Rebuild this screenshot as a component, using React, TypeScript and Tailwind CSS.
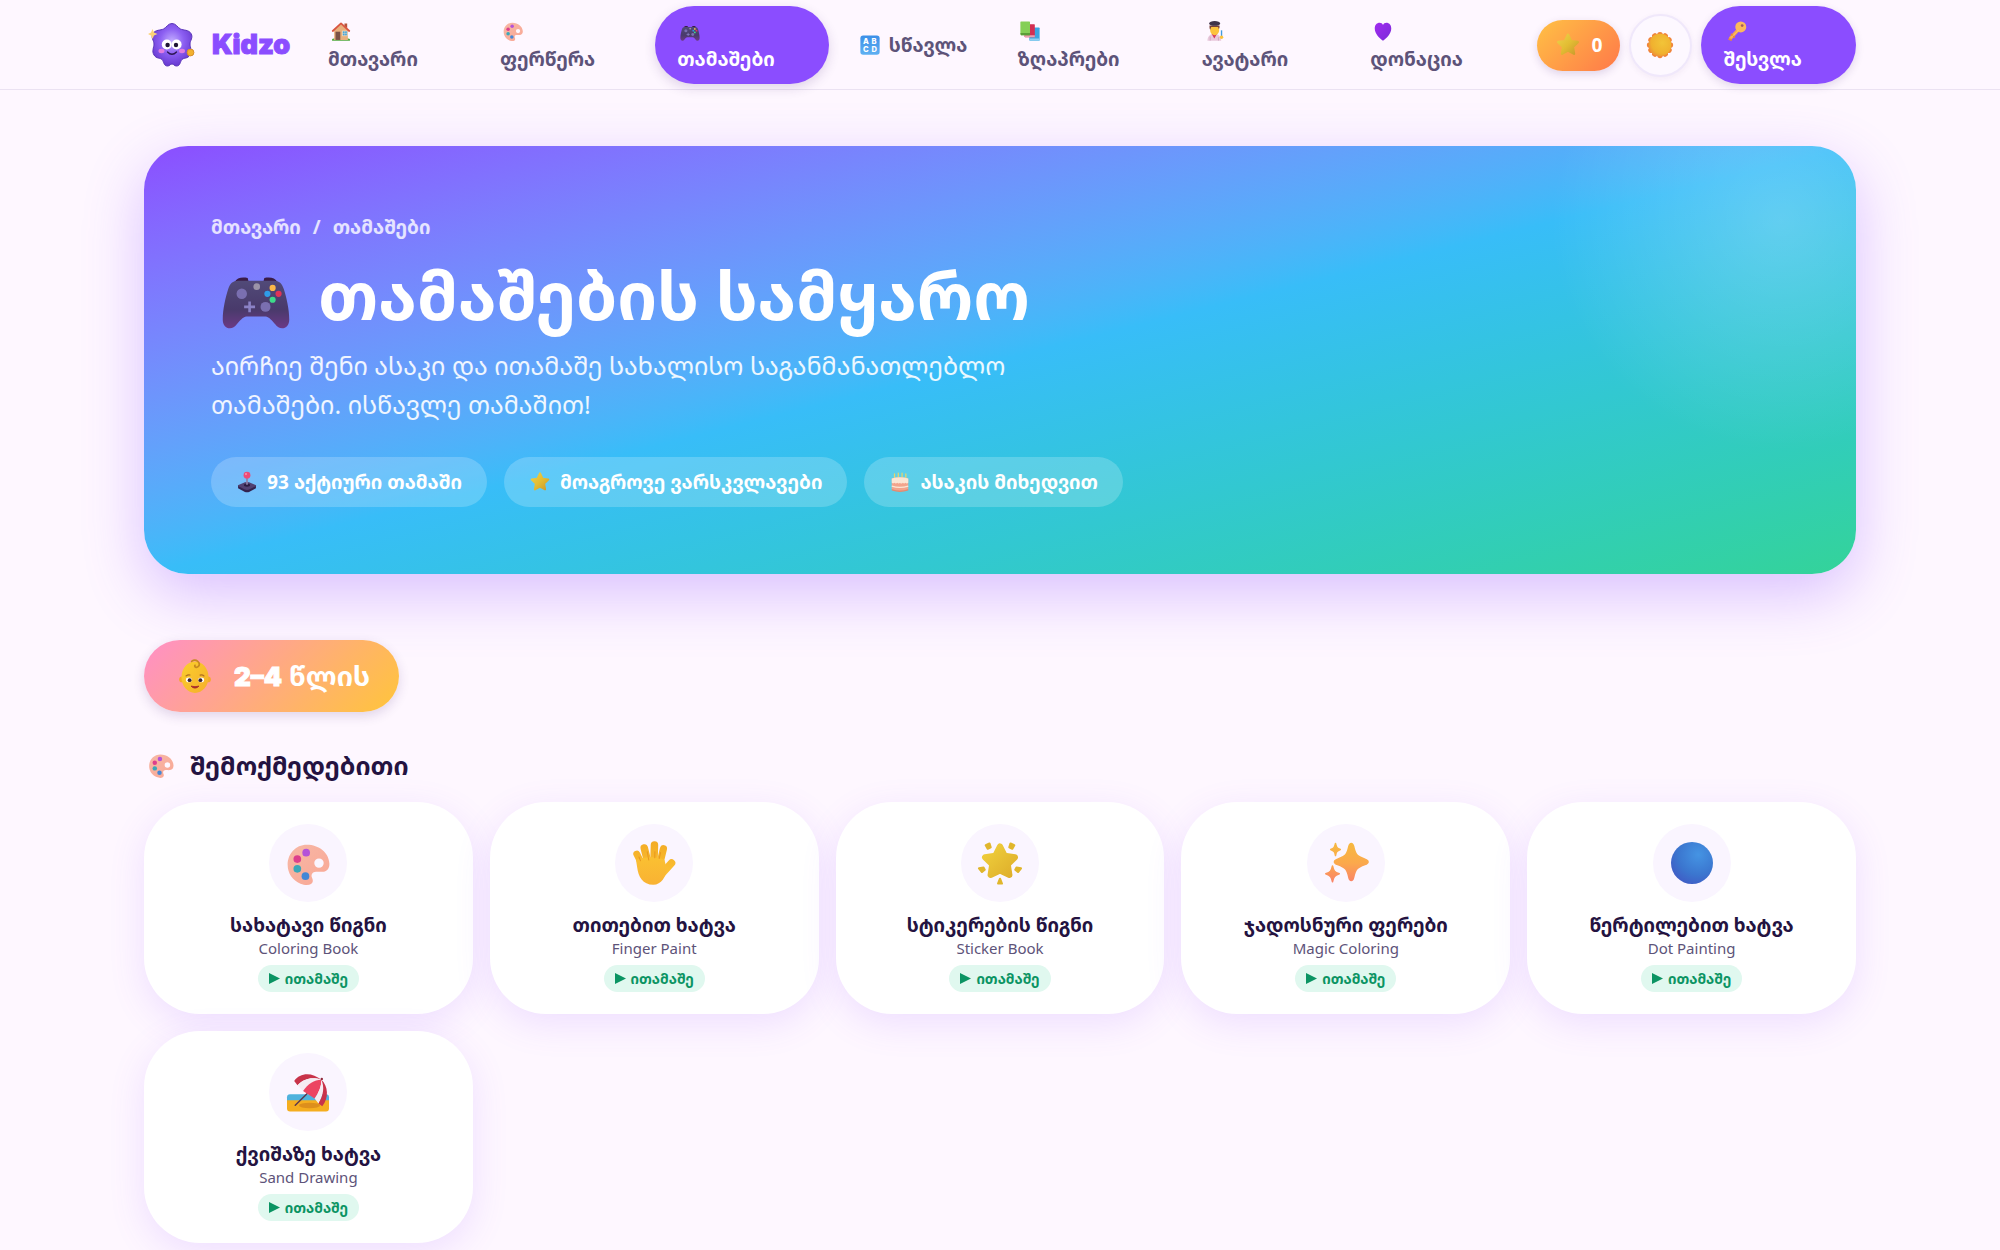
import type { ReactNode } from "react";
import { clsx } from "clsx";

type IconName =
  | "house"
  | "palette"
  | "gamepad"
  | "letters"
  | "books"
  | "artist"
  | "heart"
  | "star"
  | "sun"
  | "key"
  | "joystick"
  | "cake"
  | "baby"
  | "hand"
  | "glowStar"
  | "sparkles"
  | "blueDot"
  | "beach";

// every icon is drawn on a 32x32 grid
const ICONS: Record<IconName, ReactNode> = {
  house: (
    <>
      <path d="M3 27.500q6-2 13-2t13 2V30H3z" fill="#4fa83d" />
      <path d="M6 15 16 6l10 9v14H6z" fill="#e8b07c" />
      <path d="M21 5h4v7l-4-3z" fill="#b5543c" />
      <path d="M8 17h7v12H8z" fill="#7b5245" />
      <rect x="18" y="16" width="7" height="7" fill="#3fa6dd" stroke="#f3dcc0" />
      <path d="M21.500 16v7M18 19.500h7" stroke="#f3dcc0" strokeWidth=".7" />
      <path d="M4 16 16 5l12 11" fill="none" stroke="#d9553f" strokeWidth="2.600" strokeLinecap="round" strokeLinejoin="round" />
    </>
  ),
  palette: (
    <g transform="translate(1 2) scale(.95)">
      <path
        d="M15 2C7 2 1.500 8.500 1.500 16c0 6 3.500 11 9 13.300 3 1.200 5.800 1.200 7.400.2 1.600-1 1.500-2.800.8-4.300-.9-2-.2-3.700 1.800-4.200 2-.5 4.200.2 6.200-.2C29.500 20.300 31 18 30.800 15 30.300 7.500 23.500 2 15 2zm8.500 9.500a3.300 3.300 0 1 1 0 6.600 3.300 3.300 0 0 1 0-6.600z"
        fill="url(#paletteSkin)"
        fillRule="evenodd"
      />
      <circle cx="14.500" cy="7.500" r="2.700" fill="#b452d8" />
      <circle cx="8.300" cy="12" r="2.700" fill="#dd3f8c" />
      <circle cx="8.300" cy="18.800" r="2.700" fill="#3aa7b8" />
      <circle cx="14" cy="24" r="2.700" fill="#4487d6" />
      <defs>
        <linearGradient id="paletteSkin" x1="0" y1="0" x2="1" y2="1">
          <stop stopColor="#f7b8a6" />
          <stop offset="1" stopColor="#f9a795" />
        </linearGradient>
      </defs>
    </g>
  ),
  gamepad: (
    <g transform="translate(0 3)">
      <path d="M7 7.500C8 5.700 10 5.300 12.500 5.800l.5 2H7zM25 7.500c-1-1.800-3-2.200-5.500-1.700l-.5 2h6z" fill="#3a1c46" />
      <path
        d="M8.500 7h15c2.300 0 3.500 1.200 4.200 3.500C28.800 14 30 19 30 23.300c0 2.400-1.300 3.700-3 3.700-1.200 0-2-.5-3-1.800-1-1.200-2.400-3-4-3.200h-8c-1.600.2-3 2-4 3.200C7 26.500 6.200 27 5 27c-1.700 0-3-1.300-3-3.700C2 19 3.200 14 4.300 10.500 5 8.200 6.200 7 8.500 7z"
        fill="url(#padBody)"
      />
      <circle cx="10" cy="12.500" r="2.200" fill="#7a6fb0" />
      <circle cx="20" cy="18" r="2.100" fill="#7a6fb0" />
      <path d="M13.300 15.700v4.600M11 18h4.600" stroke="#8b82c6" strokeWidth="1.100" />
      <circle cx="16.300" cy="9.500" r="1.400" fill="#9b94a8" />
      <circle cx="23" cy="10" r="1.300" fill="#fbb849" />
      <circle cx="25.500" cy="12.500" r="1.300" fill="#e03358" />
      <circle cx="20.800" cy="12.500" r="1.300" fill="#2f9ce8" />
      <circle cx="23" cy="15" r="1.300" fill="#3ddb8a" />
      <defs>
        <linearGradient id="padBody" x1="0" y1="0" x2="0" y2="1">
          <stop stopColor="#514a78" />
          <stop offset=".6" stopColor="#493a6b" />
          <stop offset="1" stopColor="#6b3a86" />
        </linearGradient>
      </defs>
    </g>
  ),
  letters: (
    <>
      <rect x="2" y="2" width="28" height="28" rx="4" fill="url(#lettersBg)" />
      <g fill="#fff" fontFamily="Inter, sans-serif" fontWeight="800" fontSize="11" textAnchor="middle">
        <text x="10" y="14.500">A</text>
        <text x="22" y="14.500">B</text>
        <text x="10" y="26.500">C</text>
        <text x="22" y="26.500">D</text>
      </g>
      <defs>
        <linearGradient id="lettersBg" x1="0" y1="0" x2="0" y2="1">
          <stop stopColor="#3b8fe8" />
          <stop offset="1" stopColor="#5fb0f2" />
        </linearGradient>
      </defs>
    </>
  ),
  books: (
    <>
      <rect x="15" y="11" width="15" height="19" rx="1" fill="#3aa5e0" />
      <path d="M15 27h15v3H16z" fill="#8fd0f0" />
      <rect x="8" y="6" width="15" height="19" rx="1" fill="#d22f52" />
      <path d="M8 22h15v3H9z" fill="#e9a0b2" />
      <rect x="2" y="2" width="14" height="20" rx="1" fill="#84cf56" />
      <path d="M2 19h14v3H3z" fill="#5a9e38" />
    </>
  ),
  artist: (
    <>
      <path d="M5 30c0-6 4-10 10-10s10 4 10 10z" fill="#e9c9dc" />
      <path d="M11 20h8l-4 7z" fill="#d5385f" />
      <path d="M9 9h13v6c0 4-3 7-6.500 7S9 19 9 15z" fill="#fcc33c" />
      <path d="M8 8c0 3 0 5 1 6l1.500-4h10l1 3c1.500-1 1-3 1-5z" fill="#7a4136" />
      <ellipse cx="15.500" cy="5" rx="8" ry="3.500" fill="#3f3348" />
      <path d="M25.500 15v9" stroke="#3f9be0" strokeWidth="2" />
      <circle cx="25.500" cy="25" r="2.500" fill="#fcc33c" />
      <path d="M9 24v6M21 25v5" stroke="#c79ab8" />
    </>
  ),
  heart: (
    <>
      <path
        d="M16 30C11 27 4 20 4 12.500 4 7 7.300 4 11 4c2.300 0 4.200 1.300 5 3.200C16.800 5.300 18.700 4 21 4c3.700 0 7 3 7 8.500C28 20 21 27 16 30z"
        fill="url(#heartFill)"
      />
      <defs>
        <linearGradient id="heartFill" x1="0" y1="0" x2="1" y2="1">
          <stop stopColor="#a12bf0" />
          <stop offset="1" stopColor="#7a2bd8" />
        </linearGradient>
      </defs>
    </>
  ),
  star: (
    <>
      <path
        d="M16 3.500 19.700 11.200 28 12.400 22 18.300 23.400 26.700 16 22.800 8.600 26.700 10 18.300 4 12.400 12.300 11.200z"
        fill="url(#starFill)"
        stroke="url(#starFill)"
        strokeWidth="3"
        strokeLinejoin="round"
      />
      <defs>
        <linearGradient id="starFill" x1="0" y1="0" x2="1" y2="1">
          <stop stopColor="#ecd04a" />
          <stop offset=".5" stopColor="#e3bd33" />
          <stop offset="1" stopColor="#c99a2c" />
        </linearGradient>
      </defs>
    </>
  ),
  sun: (
    <>
      {[0, 30, 60, 90, 120, 150, 180, 210, 240, 270, 300, 330].map((deg) => (
        <circle key={deg} cx="16" cy="5" r="3" fill="#f0843a" transform={`rotate(${deg} 16 16)`} />
      ))}
      <circle cx="16" cy="16" r="12" fill="url(#sunFill)" />
      <defs>
        <radialGradient id="sunFill" cx=".6" cy=".4" r=".6">
          <stop stopColor="#f2c438" />
          <stop offset=".8" stopColor="#f0b12f" />
          <stop offset="1" stopColor="#ee9a35" />
        </radialGradient>
      </defs>
    </>
  ),
  key: (
    <>
      <path d="M19 13 7 26" stroke="#f7a84a" strokeWidth="5" strokeLinecap="round" />
      <path d="m8 21 4 4M4.500 28l3 1" stroke="#e8893a" strokeWidth="2.500" strokeLinecap="round" />
      <circle cx="21.500" cy="10" r="8" fill="#fbb95c" />
      <circle cx="23.500" cy="8" r="2" fill="#a45a5f" />
      <path d="M18 15 8 25" stroke="#fccb80" strokeWidth="1.200" strokeLinecap="round" />
    </>
  ),
  joystick: (
    <>
      <path d="M3 21v4l10 5.500q3 1 6 0L29 25v-4z" fill="#33234f" />
      <path d="M13 16.500 3.500 20.300q-1.500.9 0 1.900L13 27q3 1.200 6 0l9.500-4.800q1.500-1 0-1.900L19 16.500q-3-1-6 0z" fill="#514172" />
      <ellipse cx="16" cy="20.500" rx="4.500" ry="2.300" fill="#2b1c42" />
      <path d="M16 8v12" stroke="#8d7fa8" strokeWidth="2.500" />
      <circle cx="16" cy="6" r="5" fill="#ef4a78" />
      <circle cx="14.500" cy="4.500" r="1.500" fill="#f88fac" />
    </>
  ),
  cake: (
    <>
      <path d="M8 4v7M13.500 3v7M19 3v7M24.500 4v7" stroke="#e8d56a" strokeWidth="1.800" strokeLinecap="round" />
      <path d="M4 11q12-4 24 0v16q-12 5-24 0z" fill="#f3a48c" />
      <path d="M4 11q12-4 24 0v6q-2 2-4 0-2 2-4 0-2 2.500-4 0-2 2-4 0-2 2-4 0-2 1.500-4 0z" fill="#fbe6d5" />
      <path d="M4 22q12 3.500 24 0" fill="none" stroke="#fbe6d5" strokeWidth="2" />
      <path d="M4 26q12 5 24 0v2.500q-12 4-24 0z" fill="#e58a70" />
    </>
  ),
  baby: (
    <>
      <circle cx="4.500" cy="19" r="2.600" fill="#f5a929" />
      <circle cx="27.500" cy="19" r="2.600" fill="#f5a929" />
      <ellipse cx="16" cy="17" rx="12" ry="14" fill="url(#babyFace)" />
      <path d="M13 3c4-3 8.500 1.500 6 4.500-1.500 1.500-4 .5-3-1" fill="none" stroke="#c78a1f" strokeWidth="1.500" strokeLinecap="round" />
      <ellipse cx="10.500" cy="19.500" rx="2.600" ry="2.100" fill="#fff" />
      <ellipse cx="21.500" cy="19.500" rx="2.600" ry="2.100" fill="#fff" />
      <circle cx="11.200" cy="19.700" r="1.700" fill="#3a2433" />
      <circle cx="20.800" cy="19.700" r="1.700" fill="#3a2433" />
      <path d="M8 16q2-1.500 3.500-.8M20.500 15.200q2-.7 3.500.8" fill="none" stroke="#b0701f" strokeWidth="1" strokeLinecap="round" />
      <path d="M12.500 25q3.500 3.500 7 0-3.500 1-7 0z" fill="#a62a2a" stroke="#a62a2a" strokeWidth=".8" strokeLinejoin="round" />
      <defs>
        <linearGradient id="babyFace" x1="0" y1="0" x2="1" y2="1">
          <stop stopColor="#fbd02d" />
          <stop offset="1" stopColor="#f5ae2b" />
        </linearGradient>
      </defs>
    </>
  ),
  hand: (
    <>
      <g stroke="url(#handSkin)" strokeLinecap="round" fill="none">
        <path d="M8.500 18 4.500 10" strokeWidth="4.600" />
        <path d="M12 16 9.500 6" strokeWidth="5" />
        <path d="m16 15 .3-11" strokeWidth="5" />
        <path d="M20 16 22.300 6.500" strokeWidth="4.800" />
        <path d="m20.500 24 7.200-8" strokeWidth="5" />
      </g>
      <path d="M4 14c4-2 14-3 19 0l1.500 6C24 25 21 30.500 15.500 30.500 8.500 30.500 5.500 25 4.800 19z" fill="url(#handPalm)" />
      <path d="M7 14.500 6 12M12.500 14l-1-5.500M16.500 12.500l.1-4M19.500 13l.9-4" stroke="#e8991f" strokeWidth=".7" strokeLinecap="round" />
      <defs>
        <linearGradient id="handSkin" x1="0" y1="2" x2="0" y2="26" gradientUnits="userSpaceOnUse">
          <stop stopColor="#f3ac25" />
          <stop offset="1" stopColor="#fcc234" />
        </linearGradient>
        <linearGradient id="handPalm" x1="0" y1="0" x2="0" y2="1">
          <stop stopColor="#fac032" />
          <stop offset="1" stopColor="#f9b233" />
        </linearGradient>
      </defs>
    </>
  ),
  glowStar: (
    <>
      <path
        d="M16 5 19.200 11.200 26 12.200 21.200 17 22.300 24 16 21 9.700 24 10.800 17 6 12.200 12.800 11.200z"
        fill="url(#glowFill)"
        stroke="url(#glowFill)"
        strokeWidth="4"
        strokeLinejoin="round"
      />
      <g fill="#e0b62c" stroke="#e0b62c" strokeWidth="1.400" strokeLinejoin="round">
        <path d="m9 3 .8 2.500-2 1L6.500 4.200zM23 3l-.8 2.500 2 1 1.300-2.300zM2 19.500l3-.5.800 1.500L4 22zM30 19.500l-3-.5-.8 1.500L28 22zM16 26.500l1.300 3.200h-2.600z" />
      </g>
      <defs>
        <linearGradient id="glowFill" x1="0" y1="0" x2="1" y2="1">
          <stop stopColor="#f0d03c" />
          <stop offset="1" stopColor="#deae2b" />
        </linearGradient>
      </defs>
    </>
  ),
  sparkles: (
    <>
      <g fill="url(#sparkFill)" stroke="url(#sparkFill)" strokeWidth="1" strokeLinejoin="round">
        <path d="M19.500 3c.9 0 1.300.8 1.600 2 1.200 5.500 2 6.500 7.500 8.500 2.800 1 2.800 2.500 0 3.500-5.500 2-6.300 3-7.500 8.500-.6 2.800-2.600 2.800-3.200 0-1.200-5.500-2-6.500-7.500-8.500-2.800-1-2.800-2.500 0-3.500 5.500-2 6.300-3 7.500-8.500.3-1.200.7-2 1.600-2z" />
        <path d="M7 18c.8 3.500 1.300 4 4.500 5.200-3.200 1.200-3.700 1.800-4.500 5.300-.8-3.500-1.300-4.100-4.500-5.300C5.700 22 6.200 21.500 7 18z" />
        <path d="M9 3c.5 2.600.9 3 3.200 4-2.300 1-2.700 1.500-3.200 4-.5-2.500-.9-3-3.200-4C8.100 6 8.500 5.600 9 3z" />
      </g>
      <defs>
        <linearGradient id="sparkFill" x1="0" y1="3" x2="0" y2="29" gradientUnits="userSpaceOnUse">
          <stop stopColor="#f6b840" />
          <stop offset=".5" stopColor="#fba94c" />
          <stop offset="1" stopColor="#fa8268" />
        </linearGradient>
      </defs>
    </>
  ),
  blueDot: (
    <>
      <circle cx="16" cy="16" r="14" fill="url(#dotFill)" />
      <defs>
        <radialGradient id="dotFill" cx=".65" cy=".3" r=".8">
          <stop stopColor="#4594e3" />
          <stop offset=".6" stopColor="#3b76cf" />
          <stop offset="1" stopColor="#4059c4" />
        </radialGradient>
      </defs>
    </>
  ),
  beach: (
    <>
      <path d="M2 19.500q0-2 2-2h24q2 0 2 2V23H2z" fill="#4fb2dd" />
      <path d="M2 21.500h28V27q0 2-2 2H4q-2 0-2-2z" fill="#f5ae1f" />
      <ellipse cx="17" cy="25" rx="7" ry="1.800" fill="#dd8f1c" />
      <path d="M7.500 24.800 16.500 16" stroke="#5a3a4f" strokeWidth="1" strokeLinecap="round" />
      <path d="M24.900 7.800C19 3 11 2.500 6.800 8.600L9 11.500C14 6.500 19 6 24.900 7.800z" fill="#c8334a" />
      <path d="M24.900 7.800C19 6 14 6.500 9 11.500l3.700 3.800C16 10.500 20 8 24.900 7.800z" fill="#f5ecf2" />
      <path d="M24.900 7.800C20 8 16 10.500 12.700 15.300l7.700 5.100C23.500 16 25 12 24.900 7.800z" fill="#ec4562" />
      <path d="M24.900 7.800c.1 4.200-1.400 8.200-4.500 12.600l2.600 3.200C26.500 18 27 12.500 24.900 7.800z" fill="#f5ecf2" />
      <path d="M24.900 7.800C27 12.500 26.500 18 23 23.600l2.500 1.900C30 20 29.500 12 24.900 7.800z" fill="#c8334a" />
      <circle cx="25.200" cy="7.300" r=".8" fill="#8f2a3c" />
    </>
  ),
};

function Icon({ name, className }: { name: IconName; className: string }) {
  return (
    <svg viewBox="0 0 32 32" className={clsx("shrink-0", className)} aria-hidden="true">
      {ICONS[name]}
    </svg>
  );
}

function Mascot() {
  return (
    <svg viewBox="0 0 48 48" className="size-[48px] shrink-0" aria-hidden="true">
      <path
        d="M24 2.500c4 0 5.500 4 8.500 5.500s8 .5 10.500 4.500-1 7-1 10.500 2.500 7 0 11-6 2.500-8 4.500-1.500 6.500-5.500 6.500c-2.500 0-2.500-2-4.500-2s-2 2-4.500 2c-4 0-3.500-4.500-5.500-6.500s-5.500-.5-8-4.500 0-7.500 0-11-3.500-6.500-1-10.500S12.500 9.500 15.500 8s4.500-5.500 8.500-5.500z"
        fill="url(#mascotBody)"
        stroke="#5a35b8"
        strokeWidth="1"
      />
      <circle cx="18.800" cy="23.500" r="5" fill="#fff" />
      <circle cx="28.600" cy="23.500" r="5" fill="#fff" />
      <circle cx="19.600" cy="24" r="2.200" fill="#1f1535" />
      <circle cx="28" cy="24" r="2.200" fill="#1f1535" />
      <ellipse cx="13.500" cy="30" rx="3" ry="2.200" fill="#e07be0" />
      <ellipse cx="34" cy="30" rx="3" ry="2.200" fill="#e07be0" />
      <path d="M19.500 31q4.500 4.500 9 0" fill="none" stroke="#2b1650" strokeWidth="1.400" strokeLinecap="round" />
      <path d="M4.500 8 6 11.500 9.500 13 6 14.500 4.500 18 3 14.500 0 13l3-1.500z" fill="#fbd277" />
      <circle cx="42.500" cy="31.500" r="3.400" fill="#f3b12f" stroke="#d8902a" />
      <defs>
        <radialGradient id="mascotBody" cx=".5" cy=".42" r=".6">
          <stop stopColor="#c3adff" />
          <stop offset=".5" stopColor="#8c5ff2" />
          <stop offset="1" stopColor="#6637cf" />
        </radialGradient>
      </defs>
    </svg>
  );
}

type NavItem = { icon: IconName; label: string; href: string; inline?: boolean; active?: boolean };

const navItems: NavItem[] = [
  { icon: "house", label: "მთავარი", href: "#home" },
  { icon: "palette", label: "ფერწერა", href: "#paint" },
  { icon: "gamepad", label: "თამაშები", href: "#games", active: true },
  { icon: "letters", label: "სწავლა", href: "#learn", inline: true },
  { icon: "books", label: "ზღაპრები", href: "#stories" },
  { icon: "artist", label: "ავატარი", href: "#avatar" },
  { icon: "heart", label: "დონაცია", href: "#donate" },
];

const stats: { icon: IconName; label: string }[] = [
  { icon: "joystick", label: "93 აქტიური თამაში" },
  { icon: "star", label: "მოაგროვე ვარსკვლავები" },
  { icon: "cake", label: "ასაკის მიხედვით" },
];

const games: { icon: IconName; title: string; subtitle: string }[] = [
  { icon: "palette", title: "სახატავი წიგნი", subtitle: "Coloring Book" },
  { icon: "hand", title: "თითებით ხატვა", subtitle: "Finger Paint" },
  { icon: "glowStar", title: "სტიკერების წიგნი", subtitle: "Sticker Book" },
  { icon: "sparkles", title: "ჯადოსნური ფერები", subtitle: "Magic Coloring" },
  { icon: "blueDot", title: "წერტილებით ხატვა", subtitle: "Dot Painting" },
  { icon: "beach", title: "ქვიშაზე ხატვა", subtitle: "Sand Drawing" },
];

function NavLink({ item }: { item: NavItem }) {
  return (
    <a
      href={item.href}
      className={clsx(
        "flex rounded-full py-[11px] pl-[22px] leading-[28px] font-bold whitespace-nowrap",
        item.inline ? "items-center gap-2 pr-[22px]" : "flex-col pr-[54px]",
        item.active
          ? "bg-[#8b4dff] text-white shadow-[0_4px_12px_rgba(60,30,110,0.16)]"
          : "text-[#5d5379]"
      )}
    >
      <span className="flex h-[28px] items-center pl-[2px]">
        <Icon name={item.icon} className="size-[22px]" />
      </span>
      {item.label}
    </a>
  );
}

function Header() {
  return (
    <header className="border-b border-[#ebe2f2]">
      <div className="mx-auto flex max-w-[1760px] items-center gap-4 px-6 pt-[6px] pb-[5px] text-[19px]">
        <a href="#home" className="flex items-center gap-[16px] pl-1">
          <Mascot />
          <span className="font-['Inter',sans-serif] text-[27px] leading-[36px] font-black text-[#8b4dff] [-webkit-text-stroke:1px_#8b4dff]">
            Kidzo
          </span>
        </a>
        <nav className="flex items-center gap-[6px]">
          {navItems.map((item) => (
            <NavLink key={item.href} item={item} />
          ))}
        </nav>
        <div className="ml-auto flex items-center gap-[9px]">
          <div className="flex h-[51px] items-center gap-[11px] rounded-full bg-[linear-gradient(135deg,#ffc145,#ff7849)] pr-[17px] pl-[18px] font-bold text-white shadow-[0_3px_8px_rgba(60,30,110,0.16)]">
            <Icon name="star" className="size-[26px]" />
            <span>0</span>
          </div>
          <button
            type="button"
            aria-label="თემა"
            className="flex size-[63px] items-center justify-center rounded-full border-2 border-[#f0e8fb] bg-[#fdf8ff] shadow-[0_2px_6px_rgba(60,30,110,0.06)]"
          >
            <Icon name="sun" className="size-[30px]" />
          </button>
          <button
            type="button"
            className="flex flex-col rounded-full bg-[#8b4dff] py-[11px] pr-[54px] pl-[23px] text-left leading-[28px] font-bold text-white shadow-[0_3px_8px_rgba(60,30,110,0.14)]"
          >
            <span className="flex h-[28px] items-center pl-[2px]">
              <Icon name="key" className="size-[22px]" />
            </span>
            შესვლა
          </button>
        </div>
      </div>
    </header>
  );
}

function Hero() {
  return (
    <section className="rounded-[44px] bg-[radial-gradient(circle_at_calc(100%_-_75px)_75px,rgba(255,255,255,0.22),transparent_230px),linear-gradient(to_bottom_right_in_oklab,#8b4dff,#38bdf8_50%,#34d399)] p-[67px] text-white shadow-[0_20px_60px_rgba(139,77,255,0.32)]">
      <div className="flex gap-[12px] text-[19px] leading-[28px] font-bold text-white/80">
        <a href="#home">მთავარი</a>
        <span>/</span>
        <span>თამაშები</span>
      </div>
      <h1 className="mt-[14px] flex items-center gap-[24px] pl-[7px] text-[66px] leading-[80px] font-bold">
        <Icon name="gamepad" className="size-[76px]" />
        თამაშების სამყარო
      </h1>
      <p className="mt-[11px] max-w-[800px] text-[25px] leading-[39px] text-white/90">
        აირჩიე შენი ასაკი და ითამაშე სახალისო საგანმანათლებლო თამაშები. ისწავლე თამაშით!
      </p>
      <ul className="mt-[33px] flex flex-wrap gap-[17px]">
        {stats.map((stat) => (
          <li
            key={stat.label}
            className="flex h-[50px] items-center gap-[9px] rounded-full bg-white/20 px-[25px] text-[19px] font-bold"
          >
            <Icon name={stat.icon} className="size-[22px]" />
            {stat.label}
          </li>
        ))}
      </ul>
    </section>
  );
}

function GameCard({ icon, title, subtitle }: { icon: IconName; title: string; subtitle: string }) {
  return (
    <a
      href="#play"
      className="flex flex-col items-center rounded-[56px] bg-white py-[22px] text-center shadow-[0_10px_36px_rgba(139,77,255,0.14)]"
    >
      <span className="flex size-[78px] items-center justify-center rounded-full bg-[#faf5ff]">
        <Icon name={icon} className="size-[48px]" />
      </span>
      <h3 className="mt-[10px] text-[19px] leading-[26px] font-bold text-[#241341]">{title}</h3>
      <p className="text-[15px] leading-[20px] text-[#5d5379]">{subtitle}</p>
      <span className="mt-[7px] flex h-[27px] items-center gap-[5px] rounded-full bg-[#e0f8ef] px-[11px] text-[14px] font-bold text-[#0b9463]">
        <svg viewBox="0 0 11 11" className="size-[11px]" aria-hidden="true">
          <path d="M0 0l11 5.500L0 11z" fill="currentColor" />
        </svg>
        ითამაშე
      </span>
    </a>
  );
}

export default function App() {
  return (
    <div className="min-h-screen bg-[#fef7ff] font-['Noto_Sans_Georgian','Noto_Sans',sans-serif] text-[#241341]">
      <Header />
      <main className="mx-auto max-w-[1760px] px-6 pt-[56px] pb-10">
        <Hero />

        <h2 className="mt-[66px] inline-flex h-[72px] items-center gap-[21px] rounded-full bg-[linear-gradient(135deg,#ff8fc7,#ffc53a)] pr-[29px] pl-[33px] text-[27px] font-bold text-white shadow-[0_4px_12px_rgba(60,30,110,0.16)]">
          <Icon name="baby" className="size-[36px]" />
          <span>
            <span className="font-['Inter',sans-serif] text-[26px] font-black [-webkit-text-stroke:1px_white]">2–4</span> წლის
          </span>
        </h2>

        <h3 className="mt-[33px] flex items-center gap-[15px] pl-[3px] text-[25px] leading-[40px] font-bold">
          <Icon name="palette" className="size-[28px]" />
          შემოქმედებითი
        </h3>
        <div className="mt-[17px] grid grid-cols-5 gap-[17px]">
          {games.map((game) => (
            <GameCard key={game.subtitle} {...game} />
          ))}
        </div>
      </main>
    </div>
  );
}
